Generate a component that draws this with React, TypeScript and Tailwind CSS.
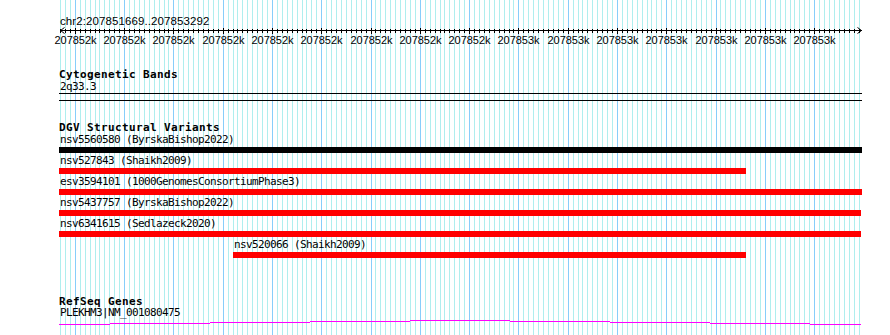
import React from "react";

const LEFT = 59;
const gridX = (k: number) => Math.floor(75.3 + 4.929 * k);
const ks = Array.from({ length: 163 }, (_, i) => i - 3);
const majors = Array.from({ length: 16 }, (_, i) => i * 10);

const mono = { fontFamily: '"DejaVu Sans Mono", "Liberation Mono", monospace' };

function Grid() {
  return (
    <svg className="absolute left-0 top-0" width={890} height={335} shapeRendering="crispEdges">
      {ks.map((k) => (
        <rect key={k} x={gridX(k)} y={0} width={1} height={335} fill={k % 10 === 0 ? "#87cefa" : "#afeeee"} />
      ))}
    </svg>
  );
}

function Ruler() {
  return (
    <svg width={803} height={19} className="block overflow-visible" shapeRendering="crispEdges">
      <rect x={1} y={3} width={802} height={1} fill="#000" />
      {ks.map((k) => {
        const x = gridX(k) - LEFT;
        const major = k % 10 === 0;
        return <rect key={k} x={x} y={major ? 1 : 2} width={1} height={major ? 6 : 4} fill="#000" />;
      })}
      <path d="M1.5 3.5 L5.5 0.5 M1.5 3.5 L5.5 6.5 M802.5 3.5 L798.5 0.5 M802.5 3.5 L798.5 6.5" stroke="#000" strokeWidth={1} fill="none" shapeRendering="auto" />
      {majors.map((k, i) => (
        <text
          key={k}
          x={gridX(k) - LEFT + 0.5}
          y={17}
          textAnchor="middle"
          fontSize={11}
          fontFamily='"Liberation Sans", Arial, sans-serif'
          fill="#000"
        >
          {i < 9 ? "207852k" : "207853k"}
        </text>
      ))}
    </svg>
  );
}

function Title({ children, className = "" }: { children: React.ReactNode; className?: string }) {
  return (
    <div className={`text-[11px] font-bold leading-[11px] tracking-[0.38px] text-black whitespace-nowrap ${className}`} style={mono}>
      {children}
    </div>
  );
}

type Row = { label: string; color: string; width: number; offset: number };
const rows: Row[] = [
  { label: "nsv5560580 (ByrskaBishop2022)", color: "bg-black", width: 803, offset: 0 },
  { label: "nsv527843 (Shaikh2009)", color: "bg-[#ff0000]", width: 687, offset: 0 },
  { label: "esv3594101 (1000GenomesConsortiumPhase3)", color: "bg-[#ff0000]", width: 803, offset: 0 },
  { label: "nsv5437757 (ByrskaBishop2022)", color: "bg-[#ff0000]", width: 802, offset: 0 },
  { label: "nsv6341615 (Sedlazeck2020)", color: "bg-[#ff0000]", width: 802, offset: 0 },
  { label: "nsv520066 (Shaikh2009)", color: "bg-[#ff0000]", width: 513, offset: 174 },
];

const segs: [number, number, number][] = [
  [0, 51, 5],
  [51, 151, 4],
  [151, 251, 3],
  [251, 351, 2],
  [351, 451, 1],
  [451, 551, 2],
  [551, 651, 3],
  [651, 751, 4],
  [751, 802, 5],
];

export default function App() {
  return (
    <div className="relative w-[890px] h-[335px] overflow-hidden bg-white">
      <Grid />
      <div className="relative flex w-[862px] flex-col pl-[59px]">
        <div
          className="mt-[15px] pl-px text-[11.5px] leading-[12px] tracking-[0.1px] text-black whitespace-nowrap"
          style={{ fontFamily: '"Liberation Sans", Arial, sans-serif' }}
        >
          chr2:207851669..207853292
        </div>
        <Ruler />

        <Title className="mt-[23px]">Cytogenetic Bands</Title>
        <div className="pl-px text-[11px] leading-[13px] tracking-[-0.62px] text-black" style={mono}>
          2q33.3
        </div>
        <div className="h-[8px] w-[803px] border-y border-black" />

        <Title className="mt-[21px]">DGV Structural Variants</Title>
        <div className="flex flex-col gap-px">
          {rows.map((r) => (
            <div key={r.label} className="flex flex-col" style={{ marginLeft: r.offset }}>
              <div className="pl-px text-[11px] leading-[14px] tracking-[-0.62px] text-black whitespace-nowrap" style={mono}>
                {r.label}
              </div>
              <div className={`h-[6px] ${r.color}`} style={{ width: r.width }} />
            </div>
          ))}
        </div>

        <Title className="mt-[38px]">RefSeq Genes</Title>
        <div className="pl-px text-[11px] leading-[12px] tracking-[-0.62px] text-black whitespace-nowrap" style={mono}>
          PLEKHM3|NM_001080475
        </div>
        <svg width={803} height={6} className="block" shapeRendering="crispEdges">
          {segs.map(([a, b, y]) => (
            <rect key={a} x={a} y={y} width={b - a} height={1} fill="#ff00ff" />
          ))}
        </svg>
      </div>
    </div>
  );
}
